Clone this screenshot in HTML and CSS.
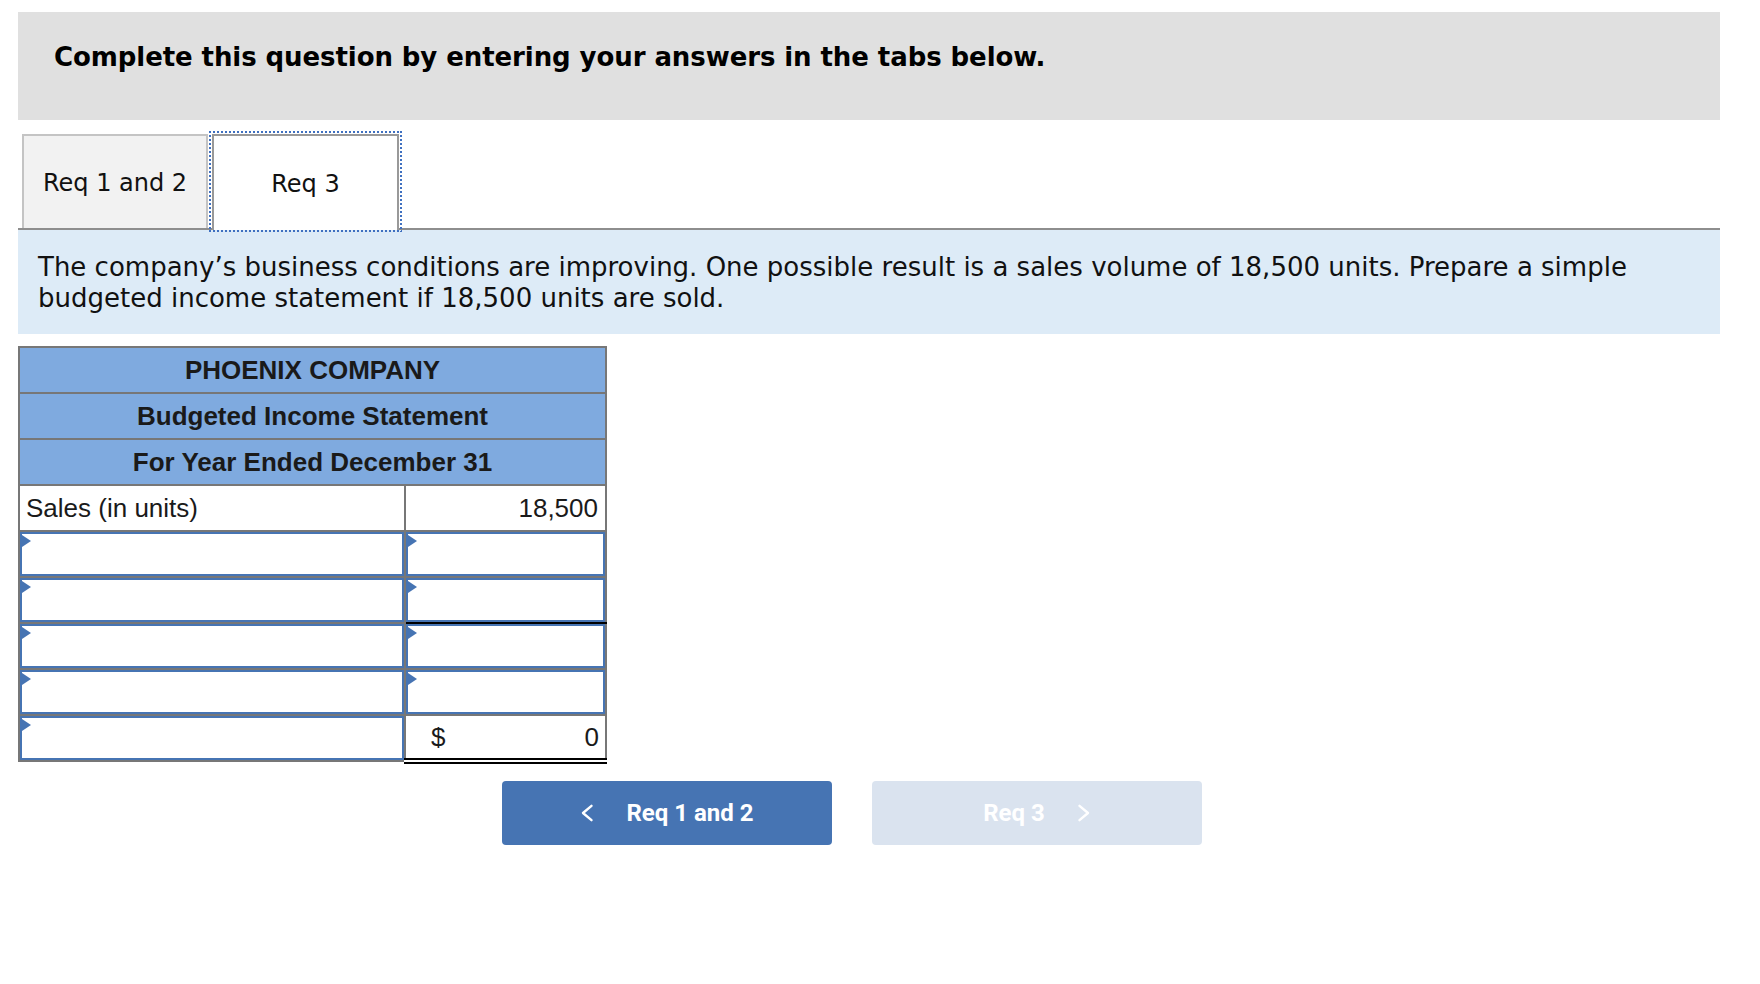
FILE: index.html
```html
<!DOCTYPE html>
<html lang="en">
<head>
<meta charset="utf-8">
<title>Budgeted Income Statement</title>
<link rel="stylesheet" href="styles.css">
</head>
<body>
<div class="page">
  <div class="banner">Complete this question by entering your answers in the tabs below.</div>

  <div class="tabs">
    <div class="tab">Req 1 and 2</div>
    <div class="tab active">Req 3</div>
  </div>

  <div class="prompt">The company’s business conditions are improving. One possible result is a sales volume of 18,500 units. Prepare a simple budgeted income statement if 18,500 units are sold.</div>

  <table class="stmt">
    <colgroup><col class="c1"><col class="c2"></colgroup>
    <tr><th colspan="2">PHOENIX COMPANY</th></tr>
    <tr><th colspan="2">Budgeted Income Statement</th></tr>
    <tr><th colspan="2">For Year Ended December 31</th></tr>
    <tr><td class="label">Sales (in units)</td><td class="num">18,500</td></tr>
    <tr><td class="in"><div class="field"></div></td><td class="in"><div class="field"></div></td></tr>
    <tr><td class="in"><div class="field"></div></td><td class="in sub"><div class="field"></div></td></tr>
    <tr><td class="in"><div class="field"></div></td><td class="in"><div class="field"></div></td></tr>
    <tr><td class="in"><div class="field"></div></td><td class="in"><div class="field"></div></td></tr>
    <tr><td class="in"><div class="field"></div></td><td class="total"><div class="amt"><span>$</span><span>0</span></div></td></tr>
  </table>

  <div class="nav">
    <button class="btn prev"><svg width="14" height="18" viewBox="0 0 14 18"><path d="M11.5 1.8 L3 9 L11.5 16.2" fill="none" stroke="#fff" stroke-width="2.4" stroke-linecap="round" stroke-linejoin="round"/></svg><span>Req 1 and 2</span></button>
    <button class="btn next" disabled><span>Req 3</span><svg width="14" height="18" viewBox="0 0 14 18"><path d="M2.5 1.8 L11 9 L2.5 16.2" fill="none" stroke="#fff" stroke-width="2.4" stroke-linecap="round" stroke-linejoin="round"/></svg></button>
  </div>
</div>
</body>
</html>
```

FILE: styles.css
```css
* { box-sizing: border-box; }
body {
  margin: 0;
  background: #fff;
  font-family: "DejaVu Sans", Verdana, sans-serif;
  color: #111;
}
.page {
  padding: 12px 40px 0 18px;
}
.banner {
  background: #e0e0e0;
  height: 108px;
  padding: 30px 36px 0;
  font-weight: bold;
  font-size: 26px;
  line-height: 30px;
  letter-spacing: -0.08px;
  color: #000;
}
.tabs {
  display: flex;
  gap: 4px;
  margin-top: 14px;
  padding-left: 4px;
  border-bottom: 2px solid #8e8e8e;
}
.tab {
  width: 186px;
  height: 94px;
  display: flex;
  align-items: center;
  justify-content: center;
  padding-top: 2px;
  background: #f2f2f2;
  border: 2px solid #c4c4c4;
  border-bottom: none;
  font-size: 24px;
  color: #111;
}
.tab.active {
  width: 187px;
  height: 96px;
  margin-bottom: -2px;
  background: #fff;
  border-color: #999;
  position: relative;
  z-index: 1;
}
.tab.active::after {
  content: "";
  position: absolute;
  top: -5px;
  left: -5px;
  right: -5px;
  bottom: -2px;
  background:
    repeating-linear-gradient(90deg, #3f70c0 0 2.5px, transparent 2.5px 4px) top left / 100% 2px no-repeat,
    repeating-linear-gradient(90deg, #3f70c0 0 2.5px, transparent 2.5px 4px) bottom left / 100% 2px no-repeat,
    repeating-linear-gradient(180deg, #3f70c0 0 2.5px, transparent 2.5px 4px) top left / 2px 100% no-repeat,
    repeating-linear-gradient(180deg, #3f70c0 0 2.5px, transparent 2.5px 4px) top right / 2px 100% no-repeat;
  pointer-events: none;
}
.prompt {
  background: #ddebf7;
  padding: 22px 20px 20px;
  font-size: 26px;
  line-height: 31px;
  color: #111;
}
.stmt {
  margin-top: 12px;
  border-collapse: collapse;
  table-layout: fixed;
  width: 587px;
  font-family: "Liberation Sans", Arial, sans-serif;
  font-size: 26px;
  color: #1a1a1a;
}
.stmt .c1 { width: 386px; }
.stmt .c2 { width: 201px; }
.stmt th, .stmt td {
  border: 2px solid #777;
  padding: 0;
  height: 46px;
}
.stmt th {
  background: #7faadf;
  font-weight: bold;
  text-align: center;
}
.stmt td.label {
  padding-left: 6px;
}
.stmt td.num {
  text-align: right;
  padding-right: 7px;
}
.field {
  position: relative;
  height: 44px;
  border: 2px solid #4674b3;
  background: #fff;
}
.field::before {
  content: "";
  position: absolute;
  left: 0;
  top: 1px;
  border-left: 9px solid #4674b3;
  border-top: 6.5px solid transparent;
  border-bottom: 6.5px solid transparent;
}
.stmt td.sub {
  border-bottom: 2px solid #000;
}
.stmt td.total {
  border-top: 2px solid #000;
  border-bottom: 6px double #000;
}
.amt {
  display: flex;
  justify-content: space-between;
  padding: 0 6px 0 25px;
}
.nav {
  display: flex;
  gap: 40px;
  margin-top: 17px;
  padding-left: 484px;
}
.btn {
  width: 330px;
  height: 64px;
  border: none;
  border-radius: 4px;
  display: flex;
  align-items: center;
  justify-content: center;
  gap: 32px;
  font-family: Roboto, "Liberation Sans", sans-serif;
  font-weight: bold;
  font-size: 24px;
  color: #fff;
  padding: 0;
}
.btn.prev { background: #4674b3; }
.btn.next { background: #dae3ef; }
.btn svg { display: block; }
```
